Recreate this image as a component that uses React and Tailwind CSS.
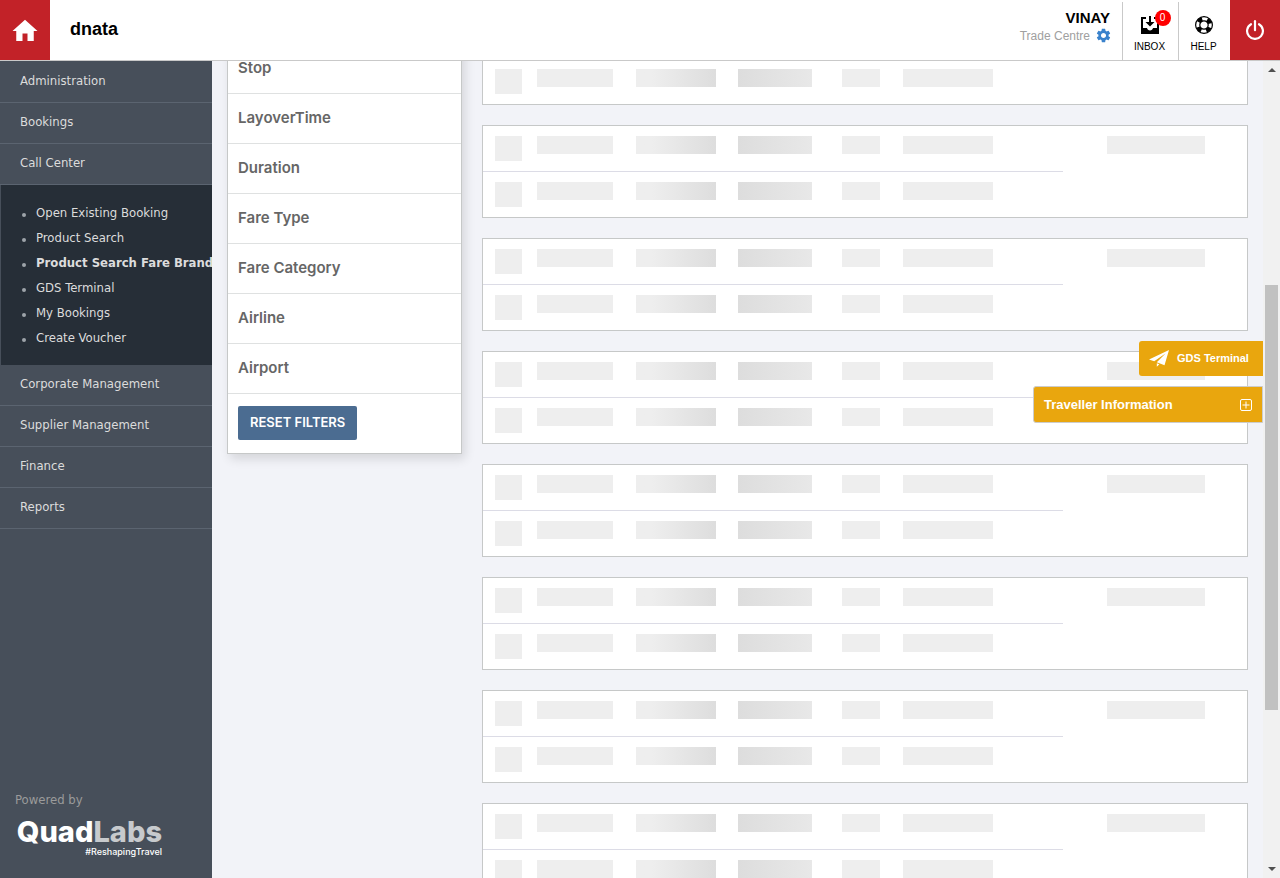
import { MdHome, MdSettings } from "react-icons/md";

const topMenu = ["Administration", "Bookings", "Call Center"];
const callCenterMenu = [
  "Open Existing Booking",
  "Product Search",
  "Product Search Fare Brand",
  "GDS Terminal",
  "My Bookings",
  "Create Voucher",
];
const bottomMenu = ["Corporate Management", "Supplier Management", "Finance", "Reports"];
const filters = ["Stop", "LayoverTime", "Duration", "Fare Type", "Fare Category", "Airline", "Airport"];

function InboxIcon() {
  return (
    <svg viewBox="0 0 18 18" className="h-[18px] w-[18px]" fill="currentColor" aria-hidden="true">
      <path d="M0 1h5v2H2v9h4c.3 1.6 1.5 2.5 3 2.5s2.7-.9 3-2.500h4V3h-3V1h5v17H0z" />
      <path d="M8 0h2v6h3.500L9 10.500 4.500 6H8z" />
    </svg>
  );
}

function LifeRingIcon() {
  return (
    <svg viewBox="0 0 18 18" className="h-[18px] w-[18px]" fill="none" stroke="currentColor" aria-hidden="true">
      <circle cx="9" cy="9" r="8.400" strokeWidth="1.200" />
      <circle cx="9" cy="9" r="4.200" strokeWidth="1.200" />
      <circle cx="9" cy="9" r="6.300" strokeWidth="4" strokeDasharray="4.600 5.296" strokeDashoffset="-2.650" />
    </svg>
  );
}

function PowerIcon() {
  return (
    <svg viewBox="0 0 20 20" className="h-5 w-5" fill="none" stroke="currentColor" strokeWidth="2.200" strokeLinecap="round" aria-hidden="true">
      <path d="M6 4.200a7.900 7.900 0 1 0 8 0" />
      <path d="M10 1.200v9" />
    </svg>
  );
}

function PlaneIcon() {
  return (
    <svg viewBox="0 0 20 17" className="h-[17px] w-5" fill="currentColor" aria-hidden="true">
      <path d="M20 0 0 9.500l5.200 1.800L16.500 3.500 7.800 12.300l7.700 3z" />
      <path d="M7.800 13.300v3.500l2.600-2.500z" />
    </svg>
  );
}

function Header() {
  return (
    <header className="flex h-[61px] shrink-0 border-b border-[#c9c9c9] bg-white font-['Liberation_Sans',sans-serif] text-black">
      <a href="#home" aria-label="Home" className="flex w-[50px] items-center justify-center bg-[#c22228] pt-0.5 text-white">
        <MdHome size={30} />
      </a>
      <h1 className="flex flex-1 items-center px-5 pb-0.5 text-[18px] font-bold">dnata</h1>
      <div className="flex flex-col items-end pt-[9px] pr-2.5">
        <strong className="mr-0.5 text-[15px] leading-[18px]">VINAY</strong>
        <span className="flex items-center gap-[5px] text-[12px] leading-4 text-[#a0a0a0]">
          Trade Centre
          <button type="button" aria-label="Settings" className="text-[#3a82cc]">
            <MdSettings size={17} />
          </button>
        </span>
      </div>
      <button type="button" className="mt-0.5 flex w-14 flex-col items-center gap-1.5 border-l border-[#c9c9c9] pt-[14px] pr-0.5 text-[10px] leading-[14px]">
        <span className="relative">
          <InboxIcon />
          <span className="absolute -top-1.5 left-3.5 flex h-4 w-4 items-center justify-center rounded-full bg-[#ff0000] text-[10px] leading-4 text-white">0</span>
        </span>
        INBOX
      </button>
      <button type="button" className="mt-0.5 flex w-[52px] flex-col items-center gap-1.5 border-l border-[#c9c9c9] pt-[14px] pr-0.5 text-[10px] leading-[14px]">
        <LifeRingIcon />
        HELP
      </button>
      <button type="button" aria-label="Log out" className="flex w-[50px] items-center justify-center bg-[#c22228] text-white">
        <PowerIcon />
      </button>
    </header>
  );
}

function MenuItem({ label }) {
  return (
    <a href="#menu" className="block border-b border-[#5b6470] px-5 pt-2.5 pb-3 leading-[18px]">
      {label}
    </a>
  );
}

function Sidebar() {
  return (
    <aside className="flex w-[212px] shrink-0 flex-col overflow-hidden bg-[#474f5a] pt-px font-['DejaVu_Sans_Condensed','DejaVu_Sans',sans-serif] text-[13px] text-[#dcdcdc]">
      <nav>
        {topMenu.map((label) => (
          <MenuItem key={label} label={label} />
        ))}
        <ul className="border-l border-[#474f5a] bg-[#262e37] py-[15px]">
          {callCenterMenu.map((label) => (
            <li key={label} className="flex h-[25px] items-center gap-2.5 pl-[21px] whitespace-nowrap">
              <span className="mt-1 h-1 w-1 shrink-0 rounded-full bg-[#9da3a9]" />
              <a href="#product" className={label === "Product Search Fare Brand" ? "font-bold" : ""}>
                {label}
              </a>
            </li>
          ))}
        </ul>
        {bottomMenu.map((label) => (
          <MenuItem key={label} label={label} />
        ))}
      </nav>
      <div className="mt-auto px-[15px] pb-5">
        <p className="leading-5 text-[#9b9b9b]">Powered by</p>
        <div className="flex w-[147px] flex-col items-end pt-2 font-[Inter,sans-serif] text-white">
          <p className="text-[29px] leading-7 font-extrabold">
            Quad<span className="text-[#c7cacd]">Labs</span>
          </p>
          <p className="text-[9px] leading-3 font-medium">#ReshapingTravel</p>
        </div>
      </div>
    </aside>
  );
}

function FilterPanel() {
  return (
    <section className="-mt-[18px] w-[235px] shrink-0 self-start border border-[#c6c8c8] bg-white font-[Inter,sans-serif] shadow-[3px_5px_10px_rgba(0,0,0,0.12)]">
      {filters.map((label) => (
        <button key={label} type="button" className="block h-[50px] w-full border-b border-[#dfe1e1] px-2.5 text-left text-[15px] font-semibold text-[#666666]">
          {label}
        </button>
      ))}
      <div className="px-2.5 pt-3 pb-[13px]">
        <button type="button" className="h-[34px] rounded-[2px] bg-[#4b6c91] px-3 text-[13px] font-semibold text-white">
          RESET FILTERS
        </button>
      </div>
    </section>
  );
}

function SkeletonRow() {
  return (
    <div className="grid grid-cols-[42px_99px_102px_104px_61px_1fr] px-3 py-2.5">
      <span className="h-[25px] w-[27px] bg-[#eeeeee]" />
      <span className="h-[18px] w-[76px] bg-[#eeeeee]" />
      <span className="h-[18px] w-20 bg-linear-to-r from-[#eeeeee] from-20% to-[#dddddd]" />
      <span className="h-[18px] w-[74px] bg-linear-to-r from-[#dddddd] to-[#e8e8e8]" />
      <span className="h-[18px] w-[38px] bg-[#eeeeee]" />
      <span className="h-[18px] w-[90px] bg-[#eeeeee]" />
    </div>
  );
}

function SkeletonCard() {
  return (
    <div className="flex border border-[#c6c8c8] bg-white">
      <div className="flex-1 divide-y divide-[#dcdce6]">
        <SkeletonRow />
        <SkeletonRow />
      </div>
      <div className="w-[184px] px-11 pt-2.5">
        <div className="h-[18px] w-[98px] bg-[#eeeeee]" />
      </div>
    </div>
  );
}

function Scrollbar() {
  return (
    <div className="flex w-[17px] shrink-0 flex-col items-center bg-[#f1f1f1] py-[7px]" aria-hidden="true">
      <svg viewBox="0 0 8 4" className="h-1 w-2" fill="#505050"><path d="M4 0 8 4H0z" /></svg>
      <div className="flex-[213]" />
      <div className="w-[13px] flex-[425] bg-[#c1c1c1]" />
      <div className="flex-[157]" />
      <svg viewBox="0 0 8 4" className="h-1 w-2" fill="#505050"><path d="M0 0h8L4 4z" /></svg>
    </div>
  );
}

export default function App() {
  return (
    <div className="flex h-screen flex-col overflow-hidden bg-[#f2f3f8]">
      <Header />
      <div className="flex min-h-0 flex-1">
        <Sidebar />
        <div className="relative flex min-w-0 flex-1">
          <main className="flex flex-1 gap-5 overflow-hidden px-[15px]">
            <FilterPanel />
            <section aria-label="Search results" aria-busy="true" className="-mt-[49px] flex flex-1 flex-col gap-5 self-start">
              {Array.from({ length: 8 }, (_, i) => (
                <SkeletonCard key={i} />
              ))}
            </section>
          </main>
          <div className="absolute top-[280px] right-0 flex flex-col items-end gap-2.5 font-['Liberation_Sans',sans-serif] font-bold text-white">
            <button type="button" className="flex h-[35px] w-[124px] items-center gap-2 rounded-l-[3px] bg-[#e9a60e] pl-2.5 text-[11px]">
              <PlaneIcon />
              GDS Terminal
            </button>
            <button type="button" className="flex h-[37px] w-[230px] items-center justify-between rounded-l-[3px] border border-[#cccccc] bg-[#e9a60e] px-2.5 text-[13px]">
              Traveller Information
              <svg viewBox="0 0 12 12" className="h-3 w-3" fill="none" stroke="currentColor" aria-hidden="true">
                <rect x=".5" y=".5" width="11" height="11" rx="1.500" />
                <path d="M6 2.500v7M2.500 6h7" />
              </svg>
            </button>
          </div>
        </div>
        <Scrollbar />
      </div>
    </div>
  );
}
